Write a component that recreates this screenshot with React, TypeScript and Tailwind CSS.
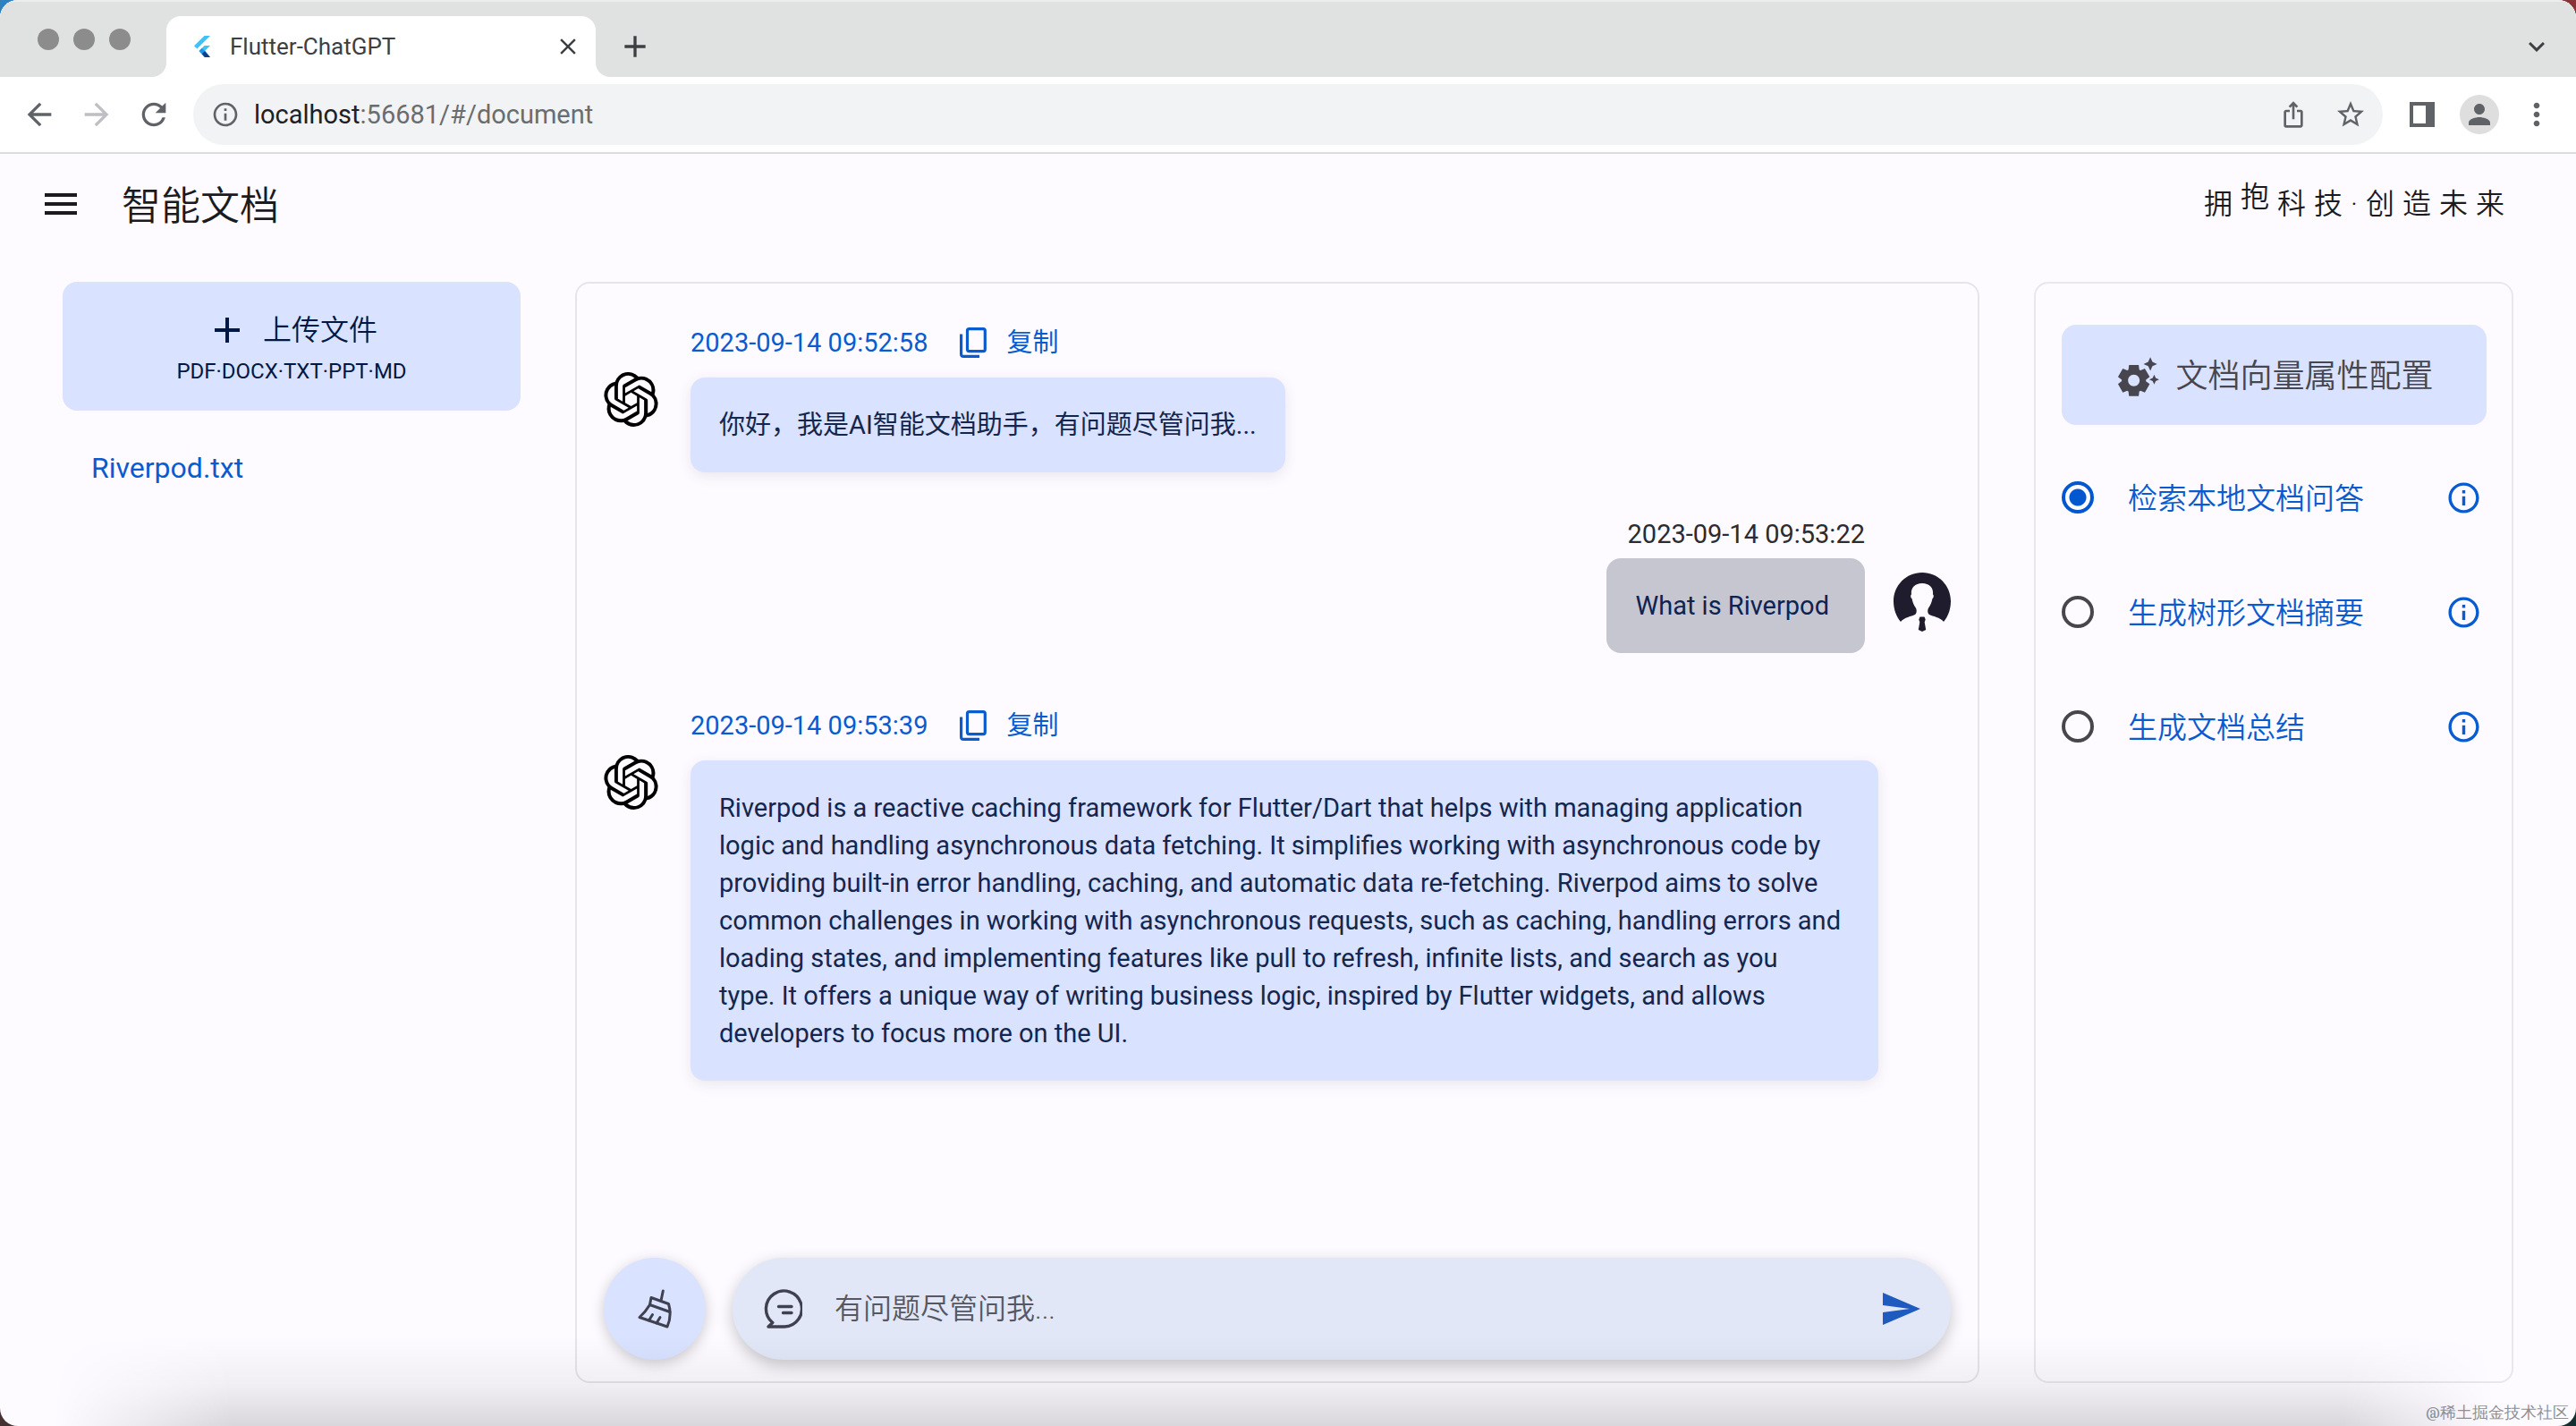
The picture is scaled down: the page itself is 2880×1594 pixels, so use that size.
import type { ReactNode } from "react";
import {
  MdAdd,
  MdArrowBack,
  MdArrowForward,
  MdClose,
  MdExpandMore,
  MdInfoOutline,
  MdIosShare,
  MdMenu,
  MdMoreVert,
  MdPerson,
  MdRefresh,
  MdSend,
  MdSettingsSuggest,
  MdStarBorder,
} from "react-icons/md";
import { SiOpenai } from "react-icons/si";

const SLOGAN = ["拥", "抱", "科", "技", "·", "创", "造", "未", "来"];

const MODES = [
  { id: "search", label: "检索本地文档问答" },
  { id: "tree", label: "生成树形文档摘要" },
  { id: "summary", label: "生成文档总结" },
];

const ANSWER =
  "Riverpod is a reactive caching framework for Flutter/Dart that helps with managing application logic and handling asynchronous data fetching. It simplifies working with asynchronous code by providing built-in error handling, caching, and automatic data re-fetching. Riverpod aims to solve common challenges in working with asynchronous requests, such as caching, handling errors and loading states, and implementing features like pull to refresh, infinite lists, and search as you\ntype. It offers a unique way of writing business logic, inspired by Flutter widgets, and allows developers to focus more on the UI.";

function FlutterLogo() {
  return (
    <svg viewBox="0 0 18 24" className="h-6 w-[18px]" aria-hidden="true">
      <path d="M11.5 0H18L3.3 14.5 0 11.3z" fill="#42c0f8" />
      <path d="M11.5 11H18l-5.8 5.8L18 24h-6.5l-6-7z" fill="#42c0f8" />
      <path d="M8.7 13.7l3.3 3.2-3.3 3.3-3.2-3.3z" fill="#2196e8" />
      <path d="M8.7 20.2l3.3-3.3L18 24h-6z" fill="#0d3f91" />
    </svg>
  );
}

function CopyIcon() {
  return (
    <svg viewBox="0 0 30 34" className="h-[34px] w-[30px]" fill="none" stroke="currentColor" strokeWidth="3.2" aria-hidden="true">
      <rect x="8.5" y="1.6" width="19.8" height="25" rx="2" />
      <path d="M1.6 7.5v22.5a2.5 2.5 0 0 0 2.5 2.4H22" />
    </svg>
  );
}

function BroomIcon() {
  return (
    <svg viewBox="0 0 38 44" className="h-11 w-[38px]" fill="none" stroke="currentColor" strokeWidth="3" strokeLinejoin="round" strokeLinecap="round" aria-hidden="true">
      <path d="M28.3 2L26 13" />
      <path d="M15 9.5L34.5 16.5C37 25 36.5 34 33 42L2 31.5C8 26 12 20 13.5 17.5z" />
      <path d="M13.5 17.5L36 25.5" />
      <path d="M12.5 35L16.5 28.5M21 38L25 31.5" />
    </svg>
  );
}

function ChatIcon() {
  return (
    <svg viewBox="0 0 44 44" className="h-11 w-11" fill="none" stroke="currentColor" strokeWidth="3.4" strokeLinejoin="round" strokeLinecap="round" aria-hidden="true">
      <path d="M6 42l4.8-4.5A20 20 0 1 1 24 42z" />
      <path d="M17.5 19.5H32M22.5 26.5H32" />
    </svg>
  );
}

function UserAvatar() {
  return (
    <svg viewBox="0 0 64 66" className="h-[66px] w-16 shrink-0" role="img" aria-label="用户">
      <path
        fill="#1f1c2e"
        d="M32 0C14.3 0 0 14.3 0 32c0 9 3 17 8 23 4-5 12-6 16-8 2.5-2 2-6 .5-8-2-3-3.400-6.500-4-10-1.600-.6-1.600-4-.5-4.500C19 17 24 12 32 12s13 5 12 12.500c1.100.5 1.100 3.900-.5 4.500-.6 3.500-2 7-4 10-1.500 2-2 6 .5 8 4 2 12 3 16 8 5-6 8-14 8-23C64 14.300 49.700 0 32 0z"
      />
      <path fill="#1f1c2e" d="M29.5 49.5h5l1.200 3-1 3 1.500 8.500L32 66l-4.200-2 1.500-8.500-1-3z" />
    </svg>
  );
}

function SidePanelIcon() {
  return (
    <svg viewBox="0 0 28 28" className="h-7 w-7" aria-hidden="true">
      <path fillRule="evenodd" fill="currentColor" d="M0 0h28v28H0zM4 4v20h14V4z" />
    </svg>
  );
}

function BrowserBar() {
  return (
    <header className="shrink-0 border-b-2 border-[#dadce0] bg-white text-[#5f6368]">
      <div className="flex h-[86px] items-start border-t-2 border-[#ececec] bg-[#e0e1e1]">
        <div className="ml-[42px] mt-[30px] flex gap-4">
          <span className="h-6 w-6 rounded-full bg-[#8c8c8c]" />
          <span className="h-6 w-6 rounded-full bg-[#8c8c8c]" />
          <span className="h-6 w-6 rounded-full bg-[#8c8c8c]" />
        </div>
        <svg viewBox="0 0 16 16" className="ml-6 h-4 w-4 self-end" aria-hidden="true">
          <path d="M16 0v16H0A16 16 0 0 0 16 0z" fill="#fff" />
        </svg>
        <div className="flex h-[68px] w-[480px] items-center self-end rounded-t-2xl bg-white pl-[31px] pr-4">
          <FlutterLogo />
          <span className="ml-[22px] flex-1 text-[26px] leading-8 text-[#3c4043]">Flutter-ChatGPT</span>
          <button aria-label="Close tab" className="text-[#3c4043]">
            <MdClose size={30} />
          </button>
        </div>
        <svg viewBox="0 0 16 16" className="h-4 w-4 self-end" aria-hidden="true">
          <path d="M0 0v16h16A16 16 0 0 1 0 0z" fill="#fff" />
        </svg>
        <button aria-label="New tab" className="ml-2 mt-[30px] text-[#3c4043]">
          <MdAdd size={40} />
        </button>
        <button aria-label="Search tabs" className="ml-auto mr-[26px] mt-8 text-[#3c4043]">
          <MdExpandMore size={36} />
        </button>
      </div>
      <div className="flex h-[84px] items-center pl-6 pr-6">
        <button aria-label="Back">
          <MdArrowBack size={40} />
        </button>
        <button aria-label="Forward" className="ml-6 text-[#bdbfc2]">
          <MdArrowForward size={40} />
        </button>
        <button aria-label="Reload" className="ml-6">
          <MdRefresh size={40} />
        </button>
        <div className="ml-6 flex h-[68px] flex-1 items-center rounded-full bg-[#f1f3f4] pl-5 pr-[18px]">
          <MdInfoOutline size={32} />
          <span className="ml-4 flex-1 text-[29px] leading-9 text-[#6a6d70]">
            <span className="text-[#202124]">localhost</span>:56681/#/document
          </span>
          <button aria-label="Share">
            <MdIosShare size={32} />
          </button>
          <button aria-label="Bookmark" className="ml-[30px]">
            <MdStarBorder size={36} />
          </button>
        </div>
        <button aria-label="Side panel" className="ml-[30px]">
          <SidePanelIcon />
        </button>
        <button aria-label="Profile" className="ml-7 flex h-11 w-11 items-center justify-center rounded-full bg-[#dedede]">
          <MdPerson size={36} />
        </button>
        <button aria-label="Menu" className="ml-[22px]">
          <MdMoreVert size={40} />
        </button>
      </div>
    </header>
  );
}

function AssistantMessage({ time, children }: { time: string; children: ReactNode }) {
  return (
    <article className="flex">
      <div className="w-[97px] shrink-0 pt-[54px]">
        <SiOpenai size={61} className="text-black" title="助手" />
      </div>
      <div className="flex flex-col items-start">
        <div className="flex h-[60px] items-start text-[29px] leading-[42px] text-[#0b5bd0]">
          <time>{time}</time>
          <button className="ml-9 flex items-center gap-[22px]">
            <CopyIcon />
            <span>复制</span>
          </button>
        </div>
        <p className="max-w-[1328px] whitespace-pre-line rounded-2xl bg-[#d9e2ff] p-8 text-[29px] leading-[42px] text-[#14264d] shadow-[0_4px_16px_rgba(60,60,90,0.1)]">
          {children}
        </p>
      </div>
    </article>
  );
}

function UserMessage({ time, children }: { time: string; children: ReactNode }) {
  return (
    <article className="flex justify-end gap-8">
      <div className="flex flex-col items-end">
        <time className="h-12 text-[29px] leading-[42px] text-[#2b2b30]">{time}</time>
        <p className="rounded-2xl bg-[#c6c6d0] py-8 pl-8 pr-10 text-[29px] leading-[42px] text-[#0f2350]">{children}</p>
      </div>
      <div className="pt-16">
        <UserAvatar />
      </div>
    </article>
  );
}

function ChatPanel() {
  return (
    <section className="flex flex-1 flex-col rounded-2xl border-2 border-[#e6e4e9] px-[30px] pb-6 pt-[45px]">
      <div className="flex flex-1 flex-col gap-12">
        <AssistantMessage time="2023-09-14 09:52:58">你好，我是AI智能文档助手，有问题尽管问我...</AssistantMessage>
        <UserMessage time="2023-09-14 09:53:22">What is Riverpod</UserMessage>
        <div className="pt-3">
          <AssistantMessage time="2023-09-14 09:53:39">{ANSWER}</AssistantMessage>
        </div>
      </div>
      <form className="flex items-center gap-[30px]" onSubmit={(e) => e.preventDefault()}>
        <button
          type="button"
          aria-label="清空对话"
          className="flex h-[114px] w-[114px] shrink-0 items-center justify-center rounded-full bg-[#d9e2ff] text-[#3f4150] shadow-[0_4px_16px_rgba(0,0,0,0.2)]"
        >
          <BroomIcon />
        </button>
        <div className="flex h-[114px] flex-1 items-center rounded-full bg-[#e1e7f6] pl-[34px] pr-8 text-[#3f4150] shadow-[0_6px_18px_rgba(0,0,0,0.22)]">
          <ChatIcon />
          <input
            aria-label="有问题尽管问我"
            placeholder="有问题尽管问我..."
            className="ml-9 h-full flex-1 bg-transparent text-[32px] font-[350] outline-none placeholder:text-[#555761]"
          />
          <button aria-label="发送" className="text-[#1f5bbf]">
            <MdSend size={48} />
          </button>
        </div>
      </form>
    </section>
  );
}

function ConfigPanel() {
  return (
    <aside className="w-[536px] shrink-0 rounded-2xl border-2 border-[#e9e7ec] pl-[29px] pr-7 pt-[46px]">
      <button className="flex h-28 w-full items-center justify-center gap-4 rounded-2xl bg-[#d9e2ff] pt-1 text-4xl font-[350] text-[#47464f]">
        <MdSettingsSuggest size={52} />
        <span>文档向量属性配置</span>
      </button>
      <div role="radiogroup" aria-label="文档处理方式" className="pt-[17px]">
        {MODES.map((mode) => (
          <div key={mode.id} className="flex h-32 items-center pr-[5px]">
            <input
              type="radio"
              id={mode.id}
              name="mode"
              defaultChecked={mode.id === "search"}
              className="h-9 w-9 shrink-0 appearance-none rounded-full border-4 border-[#47464a] checked:border-[#0057d0] checked:bg-[radial-gradient(circle,#0057d0_9px,transparent_10px)]"
            />
            <label htmlFor={mode.id} className="ml-[38px] flex-1 pt-1 text-[33px] font-[350] text-[#0b5bd0]">
              {mode.label}
            </label>
            <button aria-label={mode.label + "说明"} className="text-[#0b5bd0]">
              <MdInfoOutline size={41} />
            </button>
          </div>
        ))}
      </div>
    </aside>
  );
}

export default function App() {
  return (
    <div className="h-screen bg-[linear-gradient(160deg,#2f80bd_0%,#2f80bd_20%,#8a3236_40%,#12302f_75%)] font-['Roboto','Noto_Sans_CJK_SC',sans-serif]">
      <div className="relative flex h-full flex-col overflow-hidden rounded-[20px] bg-[#fdfbff]">
        <BrowserBar />
        <div className="flex h-28 shrink-0 items-center pl-11 pr-20 text-[#1b1b1f]">
          <button aria-label="打开菜单">
            <MdMenu size={48} />
          </button>
          <h1 className="ml-11 pt-1.5 text-[44px] font-[350]">智能文档</h1>
          <p className="ml-auto flex gap-[9px] text-[32px] font-[350]">
            {SLOGAN.map((char) => (
              <span key={char} className={char === "抱" ? "-mt-2" : ""}>
                {char}
              </span>
            ))}
          </p>
        </div>
        <main className="flex flex-1 gap-[61px] px-[70px] pb-12 pt-[31px]">
          <nav className="w-[512px] shrink-0">
            <button className="flex h-36 w-full flex-col items-center justify-center gap-1 rounded-2xl bg-[#d9e2ff] pt-1 text-[#001944]">
              <span className="flex items-center gap-4 text-[32px] font-[350] leading-[48px]">
                <MdAdd size={48} />
                上传文件
              </span>
              <span className="text-2xl leading-9">PDF·DOCX·TXT·PPT·MD</span>
            </button>
            <a href="#/document" className="ml-8 mt-10 inline-block text-[32px] leading-[48px] text-[#0b5bd0]">
              Riverpod.txt
            </a>
          </nav>
          <ChatPanel />
          <ConfigPanel />
        </main>
        <div className="pointer-events-none absolute inset-x-0 bottom-0 h-[100px] bg-[linear-gradient(to_top,rgba(0,0,0,0.14),rgba(0,0,0,0.05)_45%,transparent)] [mask-image:linear-gradient(to_right,transparent_60px,black_260px,black_calc(100%-260px),transparent_calc(100%-90px))]" />
        <p className="absolute bottom-0 right-2 font-serif text-lg leading-7 text-[#8f8f94]">@稀土掘金技术社区</p>
      </div>
    </div>
  );
}
